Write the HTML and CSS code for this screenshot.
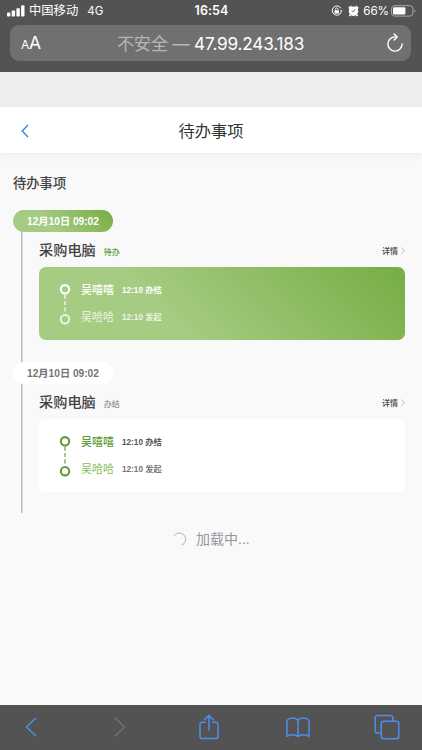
FILE: index.html
```html
<!DOCTYPE html>
<html lang="zh-CN">
<head>
<meta charset="utf-8">
<title>待办事项</title>
<link rel="stylesheet" href="styles.css">
</head>
<body>
<header class="browser-top">
  <div class="status">
    <div class="status-left">
      <svg width="18" height="12" viewBox="0 0 18 12" fill="#fff"><rect x="0" y="7.6" width="3.4" height="3.9" rx=".8"/><rect x="4.7" y="5.5" width="3.4" height="6" rx=".8"/><rect x="9.4" y="3.2" width="3.4" height="8.3" rx=".8"/><rect x="14.1" y="0.3" width="3.4" height="11.2" rx=".8"/></svg>
      <span class="carrier">中国移动</span><span class="network">4G</span>
    </div>
    <span class="clock">16:54</span>
    <div class="status-right">
      <svg class="lock" width="12" height="12" viewBox="0 0 12 12" fill="none" stroke="#fff"><path d="M9.9 3.3A4.6 4.6 0 1 0 10.2 7.2"/><path d="M8.8 5.4h2.8L10.2 7.3z" fill="#fff" stroke="none"/><rect x="3.5" y="5.3" width="4.4" height="3.2" fill="#fff" stroke="none"/><path d="M4.4 5.4V4.3a1.3 1.3 0 0 1 2.6 0v1.1" stroke-width=".8"/></svg>
      <svg class="alarm" width="11" height="12" viewBox="0 0 11 12"><circle cx="5.5" cy="6.200" r="4.700" fill="#fff"/><path d="M.8 3.500 3.400 1.300M10.200 3.500 7.600 1.300M2.500 9.800l-1 1.200M8.500 9.800l1 1.200" stroke="#fff" stroke-width="1.900" fill="none"/><path d="M5.600 6.400 7.300 4.200M5.600 6.400H3.600" stroke="#555" stroke-width=".8" fill="none"/></svg>
      <span class="percent">66%</span>
      <svg width="25" height="12" viewBox="0 0 25 12"><rect x=".5" y=".7" width="21.4" height="10.4" rx="3" fill="none" stroke="#aaa"/><rect x="2" y="2.2" width="12.4" height="7.4" rx="1.4" fill="#fff"/><path d="M23.2 4.2v3.4q1.2-.4 1.2-1.7t-1.2-1.7z" fill="#999"/></svg>
    </div>
  </div>
  <div class="address">
    <div class="text-size"><span class="small-a">A</span><span>A</span></div>
    <div class="url"><span class="insecure">不安全 —</span> <span class="host">47.99.243.183</span></div>
    <svg class="reload" width="18" height="20" viewBox="0 0 18 20" fill="none" stroke="#fff" stroke-width="1.4" stroke-linecap="round" stroke-linejoin="round"><path d="M10.500 3.900H9A7.100 7.100 0 1 0 16.100 11"/><path d="M8.100.9 11.200 4 8.100 7.100"/></svg>
  </div>
</header>
<div class="spacer"></div>
<nav class="nav">
  <svg width="8" height="14" viewBox="0 0 8 14" fill="none" stroke="#3187e8" stroke-width="1.4"><path d="M7 .9 1.2 7 7 13.1"/></svg>
  <h1>待办事项</h1>
</nav>
<main class="content">
  <h2>待办事项</h2>
  <section class="timeline">
    <article class="item active">
      <div class="date">12月10日 09:02</div>
      <div class="heading"><h3>采购电脑</h3><span class="state">待办</span><span class="detail">详情</span><svg width="4" height="7" viewBox="0 0 4 7" fill="none" stroke="#aaa" stroke-width=".8"><path d="M.5.5 3.4 3.5.5 6.5"/></svg></div>
      <div class="card">
        <svg class="steps" width="12" height="42" viewBox="0 0 12 42" fill="none" stroke="currentColor"><circle cx="6" cy="6.300" r="4.200" stroke-width="2.100"/><path d="M6 11.500V30.500" stroke-width="1.400" stroke-dasharray="4.200 2.200" opacity=".8"/><circle cx="6" cy="36.200" r="4.200" stroke-width="2.100" class="last-dot"/></svg>
        <div class="rows">
          <div class="row"><span class="name">吴嘻嘻</span><span class="time">12:10 办结</span></div>
          <div class="row origin"><span class="name">吴哈哈</span><span class="time">12:10 发起</span></div>
        </div>
      </div>
    </article>
    <article class="item">
      <div class="date">12月10日 09:02</div>
      <div class="heading"><h3>采购电脑</h3><span class="state">办结</span><span class="detail">详情</span><svg width="4" height="7" viewBox="0 0 4 7" fill="none" stroke="#aaa" stroke-width=".8"><path d="M.5.5 3.4 3.5.5 6.5"/></svg></div>
      <div class="card">
        <svg class="steps" width="12" height="42" viewBox="0 0 12 42" fill="none" stroke="currentColor"><circle cx="6" cy="6.300" r="4.200" stroke-width="2.100"/><path d="M6 11.500V30.500" stroke-width="1.400" stroke-dasharray="4.200 2.200" opacity=".8"/><circle cx="6" cy="36.200" r="4.200" stroke-width="2.100" class="last-dot"/></svg>
        <div class="rows">
          <div class="row"><span class="name">吴嘻嘻</span><span class="time">12:10 办结</span></div>
          <div class="row origin"><span class="name">吴哈哈</span><span class="time">12:10 发起</span></div>
        </div>
      </div>
    </article>
  </section>
  <div class="loading">
    <svg width="15" height="15" viewBox="0 0 15 15" fill="none" stroke="#b5b5b8"><path d="M2 4A6.300 6.300 0 1 1 9.500 13.200"/></svg>
    <span>加载中...</span>
  </div>
</main>
<footer class="toolbar">
  <svg width="12" height="20" viewBox="0 0 12 20"><path d="M10.6 1.2 1.4 10l9.2 8.8"/></svg>
  <svg class="disabled" width="12" height="20" viewBox="0 0 12 20"><path d="M1.4 1.2 10.6 10l-9.2 8.8"/></svg>
  <svg width="20" height="26" viewBox="0 0 20 26"><path d="M6.3 8.2H3.2A2.2 2.2 0 0 0 1 10.4v12A2.2 2.2 0 0 0 3.2 24.600h13.600a2.200 2.200 0 0 0 2.200-2.200v-12a2.200 2.200 0 0 0-2.200-2.200H13.700M10 16V1.500M5.700 5.600 10 1.300l4.300 4.300"/></svg>
  <svg width="24" height="21" viewBox="0 0 24 21"><path d="M12 3.500Q10.500 1 6.700 1T1 3.400V19.500Q2.800 17.700 6.500 17.700T12 19.500Q13.800 17.700 17.500 17.700T23 19.500V3.400Q21.100 1 17.300 1T12 3.500V19.500"/></svg>
  <svg width="26" height="26" viewBox="0 0 26 26"><rect x="7.200" y="7.300" width="17.600" height="17.400" rx="2.500"/><path d="M7.200 18.900H3.700a2.500 2.500 0 0 1-2.500-2.500V3.900A2.500 2.500 0 0 1 3.700 1.400H16.300a2.500 2.500 0 0 1 2.500 2.500V7.300"/></svg>
</footer>
</body>
</html>
```
FILE: styles.css
```css
* { box-sizing: border-box; }
body {
  margin: 0;
  width: 422px;
  height: 750px;
  overflow: hidden;
  display: flex;
  flex-direction: column;
  background: #f9f9f9;
  font-family: "Liberation Sans", "Noto Sans CJK SC", sans-serif;
  white-space: nowrap;
}
h1, h2, h3 { margin: 0; font-weight: 500; }
svg { display: block; flex: none; }

.browser-top {
  height: 72px;
  flex: none;
  background: #535353;
  color: #fff;
  font-family: Inter, "Noto Sans CJK SC", sans-serif;
}
.status {
  height: 25px;
  padding: 0 6px 3px 7px;
  display: grid;
  grid-template-columns: 1fr auto 1fr;
  align-items: center;
  font-size: 12px;
  line-height: 18px;
}
.status-left, .status-right { display: flex; align-items: center; }
.status-right { justify-content: flex-end; }
.carrier { margin-left: 4px; font-size: 12.300px; }
.network { margin-left: 9px; font-size: 11.500px; }
.clock { font-size: 12.500px; font-weight: 600; letter-spacing: .1px; }
.alarm { margin: 0 4px 0 5px; }
.percent { margin-right: 2px; font-size: 11.700px; letter-spacing: -.1px; }
.address {
  height: 36px;
  margin: 0 11px 0 10px;
  padding: 0 7px 0 11px;
  border-radius: 9px;
  background: #707070;
  display: grid;
  grid-template-columns: 30px 1fr 30px;
  align-items: center;
  line-height: 24px;
}
.text-size { font-size: 17.500px; padding-top: 2px; letter-spacing: -.3px; }
.small-a { font-size: 12px; }
.url { padding: 1px 4px 0 0; text-align: center; font-size: 17.200px; letter-spacing: -.2px; }
.host { letter-spacing: -.2px; }
.insecure { color: #b7b7b7; }
.reload { justify-self: end; }

.spacer { height: 35px; flex: none; background: #ededed; }
.nav {
  height: 46px;
  flex: none;
  padding: 2px 21px 0;
  display: grid;
  grid-template-columns: 30px 1fr 30px;
  align-items: center;
  background: #fff;
  box-shadow: 0 1px 8px rgba(0, 0, 0, .07);
  clip-path: inset(0 0 -10px 0);
}
.nav h1 {
  text-align: center;
  font-size: 16.300px;
  font-weight: 400;
  line-height: 24px;
  color: #333;
}

.content { flex: 1; padding: 21px 17px 0 13px; }
.content h2 { font-size: 13.300px; line-height: 20px; color: #444; }
.timeline {
  height: 303px;
  margin-top: 16px;
  background: linear-gradient(#bbb, #bbb) 8px 0 / 1.500px 100% no-repeat;
}
.item { height: 152px; }
.date {
  width: 100px;
  height: 22px;
  border-radius: 11px;
  background: #fff;
  color: #747474;
  font-size: 10.200px;
  font-weight: 700;
  line-height: 23px;
  text-align: center;
}
.active .date {
  background: linear-gradient(45deg, #a6cb82 35%, #76ad43);
  color: #fff;
}
.heading {
  height: 35px;
  padding: 1px 0 0 26px;
  display: flex;
  align-items: center;
}
.heading h3 { font-size: 14.200px; line-height: 22px; color: #444; }
.state { margin: 2px 0 0 8px; font-size: 8px; color: #747474; }
.active .state { color: #639b3c; font-weight: 500; }
.detail {
  margin: 1px 3px 0 auto;
  font-size: 8px;
  font-weight: 500;
  color: #444;
}
.heading svg { margin-top: 1px; }
.card {
  height: 73px;
  margin-left: 26px;
  padding: 16px 20px;
  border-radius: 7px;
  display: flex;
  background: #fff;
  color: #5f9b37;
}
.active .card {
  background: linear-gradient(45deg, #a6cb82 35%, #76ad43);
  color: #fff;
}
.active .last-dot { opacity: .75; }
.rows { margin-left: 10px; padding-top: 1px; }
.row {
  height: 26.500px;
  padding-bottom: 14.500px;
  display: flex;
  align-items: center;
  line-height: 12px;
}
.name { font-size: 11px; font-weight: 500; }
.time {
  margin: 2px 0 0 8px;
  font-size: 8.200px;
  font-weight: 700;
  color: #555;
}
.origin .name { font-weight: 400; color: #7fbd50; }
.origin .time { color: #777; }
.active .time { color: inherit; }
.active .origin { opacity: .8; }
.active .origin .name { color: inherit; }
.loading {
  margin-top: 14px;
  padding-left: 159px;
  display: flex;
  align-items: center;
  gap: 9px;
  color: #969799;
  font-size: 14px;
  line-height: 24px;
}

.toolbar {
  height: 45px;
  flex: none;
  padding: 0 0 1px 17px;
  margin-left: -31px;
  width: 453px;
  display: grid;
  grid-template-columns: repeat(5, 89px);
  justify-items: center;
  align-items: center;
  background: #535353;
  fill: none;
  stroke: #4c8fe7;
  stroke-width: 1.500;
  stroke-linecap: round;
  stroke-linejoin: round;
}
.disabled { stroke: #737373; }
```
